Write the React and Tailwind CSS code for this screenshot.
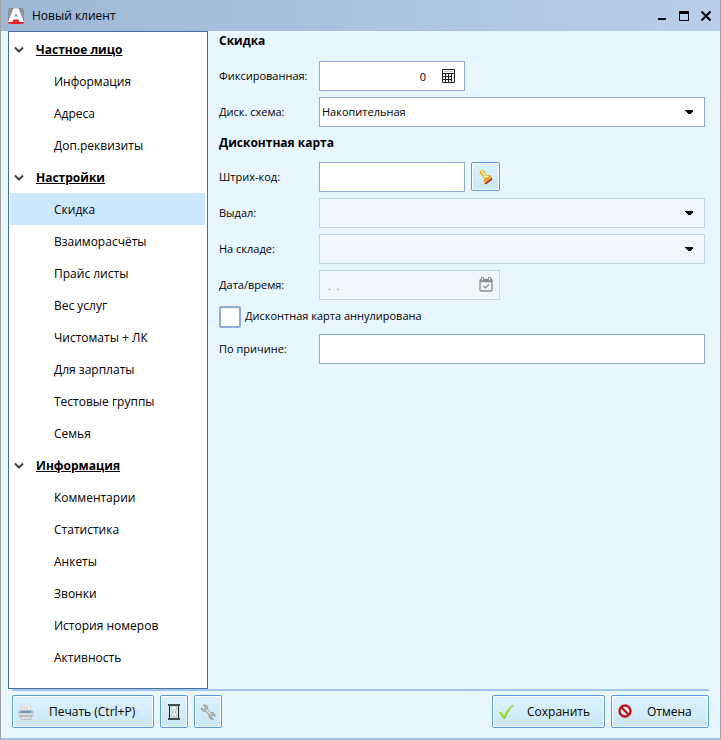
import React from "react";

const GROUPS = [
  { title: "Частное лицо", items: ["Информация", "Адреса", "Доп.реквизиты"] },
  {
    title: "Настройки",
    items: ["Скидка", "Взаиморасчёты", "Прайс листы", "Вес услуг", "Чистоматы + ЛК", "Для зарплаты", "Тестовые группы", "Семья"],
  },
  { title: "Информация", items: ["Комментарии", "Статистика", "Анкеты", "Звонки", "История номеров", "Активность"] },
];

function Logo() {
  return (
    <svg width="16" height="16" viewBox="0 0 16 16" aria-hidden="true">
      <rect width="16" height="16" rx="2" fill="#8d9299" />
      <path d="M0 12Q8 8 16 12V14Q16 16 14 16H2Q0 16 0 14Z" fill="#e8232d" />
      <path d="M5.500 0.500h5L16 14h-4.500l-1-2.500h-5l-1 2.500H0ZM8 4.500 6.500 8.500h3Z" fill="#fff" fillRule="evenodd" />
    </svg>
  );
}

function Chevron() {
  return (
    <svg width="10" height="8" viewBox="0 0 10 8" fill="none" stroke="#444" strokeWidth="2" aria-hidden="true">
      <path d="m1 1.500 4 4 4-4" />
    </svg>
  );
}

function Calculator() {
  return (
    <svg width="13" height="14" viewBox="0 0 13 14" fill="none" stroke="#222" aria-hidden="true">
      <path d="M.5.5h12v13H.5ZM.5 4.500h12M.5 7.500h9M.5 10.500h9M3.500 4.500v9M6.500 4.500v9M9.500 4.500v9" />
      <path d="M2 2.500h9" stroke="#ccc" />
    </svg>
  );
}

function CalendarIcon() {
  return (
    <svg width="14" height="15" viewBox="0 0 14 15" fill="none" stroke="#878c90" aria-hidden="true">
      <rect x="1" y="2.500" width="12" height="11.500" rx="1" strokeWidth="1.300" />
      <path d="M1 4h12" strokeWidth="2.500" />
      <path d="M3.500 0v4M10.500 0v4" strokeWidth="2.500" />
      <path d="M3.500 1v2.500M10.500 1v2.500" stroke="#f0f8ff" />
      <path d="m4.500 9 2 2 3.500-3.500" strokeWidth="1.200" />
    </svg>
  );
}

function Stamp() {
  return (
    <svg width="16" height="16" viewBox="0 0 16 16" aria-hidden="true">
      <path d="M6.500 14.500 14 8.500V11l-5.500 4Q6.500 15.500 6.500 14.500Z" fill="#b3221a" />
      <path d="M6.200 7.500 9 6.200Q13.500 5.500 14 8.500L7 14Q4.800 12.500 6.200 9.500Z" fill="#dcaa28" />
      <path d="M2 2Q4.500-.2 7 2.200L8.500 7 6.200 9.200 3.200 6Q.8 4 2 2Z" fill="#e3b732" />
      <path d="M3.200 2.800Q4.500 2 5.200 3.600L7.200 8Q8.500 7.200 10.500 7.800" fill="none" stroke="#fff0a0" strokeWidth="1.500" />
    </svg>
  );
}

function Printer() {
  return (
    <svg width="16" height="18" viewBox="0 0 16 18" aria-hidden="true">
      <path d="M3.500 1h7l2 2v6h-9Z" fill="#eef0f2" stroke="#c9ced2" strokeWidth=".7" />
      <path d="M5 4h5M5 6h6" stroke="#cbd0d4" />
      <path d="M2 7h12l1.500 2v4.500H.5V9Z" fill="#b3b6bb" />
      <path d="M3 8h10v2H3Z" fill="#6f98c0" />
      <path d="M.5 10.500h15v1.500H.5Z" fill="#e6e7e9" />
      <path d="M2 13.500h12l-1 3H3Z" fill="#dcdee0" stroke="#a8abae" strokeWidth=".6" />
    </svg>
  );
}

function Hourglass() {
  return (
    <svg width="12" height="16" viewBox="0 0 12 16" aria-hidden="true">
      <path d="M3 2h6v3L7 8l2 3v3H3v-3l2-3-2-3Z" fill="#edf5f7" stroke="#a3b1b5" strokeWidth=".8" />
      <path d="M4 5h4L6 7ZM6 10l2.500 4h-5Z" fill="#c3ccce" />
      <path d="M0 1h12M0 15h12" stroke="#171717" strokeWidth="1.500" />
      <path d="M1.500 2v12M10.500 2v12" stroke="#222" />
    </svg>
  );
}

function Wrench() {
  return (
    <svg width="16" height="16" viewBox="0 0 16 16" aria-hidden="true">
      <path d="M1.200 3.500 3.500 5.500 5 4.500 4.800 2.500 3 1.200Q6 .3 7.500 2.500 8 4 7.600 5.200L10.800 8.600Q13.500 8 14.800 10.500L15 12.500 12.800 11 11.300 12 11.500 13.800 13.500 15Q10.500 15.800 9.200 13.500 8.800 12 9.200 10.800L5.800 7.400Q3 8 1.600 6Z" fill="#bcbcbc" stroke="#8f8f8f" strokeWidth=".8" />
      <path d="m6.500 6 4 4" stroke="#e5e5e5" strokeWidth="1.200" />
    </svg>
  );
}

function Check() {
  return (
    <svg width="16" height="16" viewBox="0 0 16 16" aria-hidden="true">
      <path d="M.8 8.500Q2 7.300 3.500 8L6 11.500Q9 4.500 14.500 1L15.500 1.500Q10 7 7.500 14.500L5.500 15Q3.500 11 .8 8.500Z" fill="#8cc820" />
      <path d="M2 8.500Q4 9 5.800 13 9 6 13.500 2.500" fill="none" stroke="#b6e641" />
    </svg>
  );
}

function Forbidden() {
  return (
    <svg width="14" height="15" viewBox="0 0 14 15" fill="none" aria-hidden="true">
      <path d="M3 14h8" stroke="#bdc9cc" />
      <circle cx="7" cy="7" r="5.500" fill="#f2f6f8" stroke="#c2121e" strokeWidth="2.400" />
      <path d="m3 3 8 8" stroke="#c2121e" strokeWidth="2.400" />
    </svg>
  );
}

function Row({ label, id, children }) {
  return (
    <div className="flex h-9 items-start">
      <label htmlFor={id} className="w-25 shrink-0 leading-[30px]">{label}</label>
      {children}
    </div>
  );
}

function Field({ className = "", ...rest }) {
  return (
    <input
      {...rest}
      className={"h-[30px] border border-[#8faad9] bg-white px-0.5 outline-none disabled:border-[#bfd5ea] disabled:bg-[#f0f8ff] " + className}
    />
  );
}

function Dropdown({ id, disabled, value = "" }) {
  return (
    <div className="relative min-w-0 flex-1">
      <select
        id={id}
        disabled={disabled}
        defaultValue={value}
        className="block h-[30px] w-full appearance-none border border-[#8faad9] bg-white px-0.5 opacity-100 outline-none disabled:border-[#bfd5ea] disabled:bg-[#f0f8ff]"
      >
        <option value={value}>{value}</option>
      </select>
      <svg className="pointer-events-none absolute top-[13px] right-3" width="8" height="4" viewBox="0 0 8 4" shapeRendering="crispEdges" aria-hidden="true">
        <path d="M0 0h8v1L5 4H3L0 1Z" />
      </svg>
    </div>
  );
}

function ActionButton({ className = "", children, ...rest }) {
  return (
    <button
      type="button"
      {...rest}
      className={"flex h-[33px] items-center rounded-xs border border-[#5c9ae0] bg-linear-to-b from-[#dcf3fe] to-[#c9e7f6] text-xs inset-ring inset-ring-white " + className}
    >
      {children}
    </button>
  );
}

export default function App() {
  return (
    <div className="flex min-h-screen flex-col border-r border-b-2 border-l border-[#a0a0a0] border-b-[#a2c3ee] bg-[#e8f7ff] font-['Open_Sans','Noto_Sans',sans-serif] text-[11px] text-black">
      <header className="flex h-[31px] items-center bg-linear-to-r from-[#9db7d5] to-[#b7cfe9] pr-2 pl-[7px]">
        <Logo />
        <h1 className="ml-2 flex-1 text-xs">Новый клиент</h1>
        <div className="flex gap-2.5">
          <button type="button" aria-label="Свернуть">
            <svg width="12" height="12" viewBox="0 0 12 12" shapeRendering="crispEdges"><path d="M2 8h8v2H2Z" /></svg>
          </button>
          <button type="button" aria-label="Развернуть">
            <svg width="12" height="12" viewBox="0 0 12 12" shapeRendering="crispEdges"><path d="M1 1h10v10H1ZM2 4v6h8V4Z" fillRule="evenodd" /></svg>
          </button>
          <button type="button" aria-label="Закрыть">
            <svg width="12" height="12" viewBox="0 0 12 12" stroke="#000" strokeWidth="2"><path d="m1.500 1.500 9 9M10.500 1.500l-9 9" /></svg>
          </button>
        </div>
      </header>

      <div className="flex flex-1 pr-[15px] pl-[7px]">
        <nav className="w-[200px] shrink-0 border border-[#456da0] bg-white pt-px pb-[15px] text-xs">
          {GROUPS.map((g) => (
            <section key={g.title}>
              <h2 className="flex h-8 items-center pt-0.5 pl-[5px]">
                <Chevron />
                <span className="ml-3 font-bold underline">{g.title}</span>
              </h2>
              <ul>
                {g.items.map((t) => (
                  <li key={t} className="px-px pr-0.5">
                    <a href="#" className={"flex h-8 items-center pt-0.5 pl-11 " + (t === "Скидка" ? "bg-[#cce8ff]" : "")}>{t}</a>
                  </li>
                ))}
              </ul>
            </section>
          ))}
        </nav>

        <main className="min-w-0 flex-1 pl-[11px]">
          <h2 className="h-[30px] text-xs leading-5 font-bold">Скидка</h2>
          <Row label="Фиксированная:" id="fixed">
            <div className="relative">
              <Field id="fixed" defaultValue="0" className="w-[146px] pr-[38px] text-right" />
              <button type="button" aria-label="Калькулятор" className="absolute top-2 right-2.5"><Calculator /></button>
            </div>
          </Row>
          <Row label="Диск. схема:" id="scheme"><Dropdown id="scheme" value="Накопительная" /></Row>
          <h2 className="h-[29px] text-xs leading-5 font-bold">Дисконтная карта</h2>
          <Row label="Штрих-код:" id="barcode">
            <Field id="barcode" className="w-[146px]" />
            <button type="button" aria-label="Сканировать" className="ml-1.5 flex h-[29px] w-[29px] items-center justify-center rounded-xs border border-[#5c9ae0] bg-linear-to-b from-[#dcf3fe] to-[#c9e7f6] inset-ring inset-ring-white">
              <Stamp />
            </button>
          </Row>
          <Row label="Выдал:" id="issued"><Dropdown id="issued" disabled /></Row>
          <Row label="На складе:" id="store"><Dropdown id="store" disabled /></Row>
          <Row label="Дата/время:" id="date">
            <div className="relative">
              <Field id="date" disabled defaultValue=".  ." className="w-[181px] pl-2 text-[#888]" />
              <button type="button" aria-label="Календарь" disabled className="absolute top-[7px] right-[7px]"><CalendarIcon /></button>
            </div>
          </Row>
          <label className="flex h-7 items-start gap-1 leading-5">
            <input type="checkbox" className="h-[22px] w-[22px] appearance-none rounded-xs border-2 border-[#8faad9] bg-white inset-shadow-xs" />
            Дисконтная карта аннулирована
          </label>
          <Row label="По причине:" id="reason"><Field id="reason" className="min-w-0 flex-1" /></Row>
        </main>
      </div>

      <footer className="pr-[11px] pl-[11px]">
        <div className="h-0.5 bg-[#a2c3ee]" />
        <div className="flex pt-1 pb-[10px]">
          <ActionButton className="w-[142px] pl-[5px]"><Printer /><span className="ml-[15px] whitespace-nowrap">Печать (Ctrl+P)</span></ActionButton>
          <ActionButton aria-label="История" className="ml-1.5 w-7 justify-center"><Hourglass /></ActionButton>
          <ActionButton aria-label="Настройки" className="ml-1.5 w-7 justify-center"><Wrench /></ActionButton>
          <ActionButton className="ml-auto w-[113px] pl-[5px]"><Check /><span className="ml-[13px]">Сохранить</span></ActionButton>
          <ActionButton className="ml-1.5 w-[98px] pl-1.5"><Forbidden /><span className="ml-[15px]">Отмена</span></ActionButton>
        </div>
      </footer>
    </div>
  );
}
